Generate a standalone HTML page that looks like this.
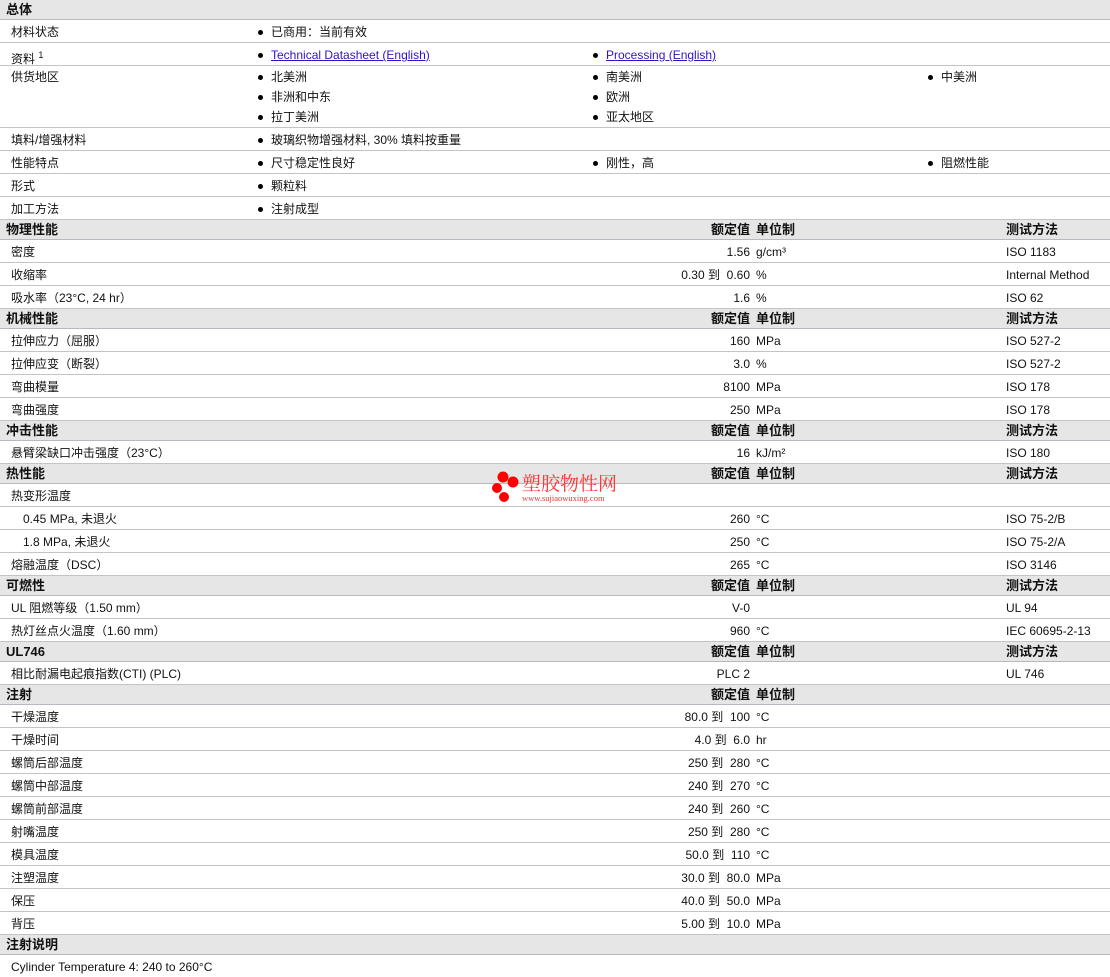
<!DOCTYPE html>
<html><head><meta charset="utf-8"><style>
*{margin:0;padding:0;box-sizing:border-box}
body{width:1110px;height:975px;background:#fff;font-family:"Liberation Sans","Noto Sans CJK SC",sans-serif;font-size:12px;color:#111;overflow:hidden;position:relative}
.r{position:relative;height:23px;border-bottom:1px solid #c4c4c8;}
.h{position:relative;height:20px;background:#e6e6e6;border-bottom:1px solid #b8b8c0;font-weight:bold;font-size:13px}
.r span,.h span{position:absolute;top:1px;line-height:22px;white-space:nowrap}
.h span{line-height:19px;top:0}
.l{left:11px}.hl{left:6px}
.v{right:360px;text-align:right}
.u{left:756px}
.m{left:1006px}
.b{padding-left:13px}
.b:before{content:"";position:absolute;left:0;top:9px;width:5px;height:5px;border-radius:50%;background:#000}
a{color:#3311cc;text-decoration:underline}
.c1{left:258px}.c2{left:593px}.c3{left:928px}
.logo{position:absolute;left:491px;top:470px}
</style></head><body>
<div class="h"><span class="hl">总体</span></div>
<div class="r"><span class="l">材料状态</span><span class="c1 b">已商用：当前有效</span></div>
<div class="r"><span class="l">资料 <sup style="font-size:9px">1</sup></span><span class="c1 b"><a>Technical Datasheet (English)</a></span><span class="c2 b"><a>Processing (English)</a></span></div>
<div class="r" style="height:62px"><span class="l" style="top:0">供货地区</span>
<span class="c1 b" style="top:0">北美洲</span><span class="c1 b" style="top:20px">非洲和中东</span><span class="c1 b" style="top:40px">拉丁美洲</span>
<span class="c2 b" style="top:0">南美洲</span><span class="c2 b" style="top:20px">欧洲</span><span class="c2 b" style="top:40px">亚太地区</span>
<span class="c3 b" style="top:0">中美洲</span></div>
<div class="r"><span class="l">填料/增强材料</span><span class="c1 b">玻璃织物增强材料, 30% 填料按重量</span></div>
<div class="r"><span class="l">性能特点</span><span class="c1 b">尺寸稳定性良好</span><span class="c2 b">刚性，高</span><span class="c3 b">阻燃性能</span></div>
<div class="r"><span class="l">形式</span><span class="c1 b">颗粒料</span></div>
<div class="r"><span class="l">加工方法</span><span class="c1 b">注射成型</span></div>

<div class="h"><span class="hl">物理性能</span><span class="v">额定值</span><span class="u">单位制</span><span class="m">测试方法</span></div>
<div class="r"><span class="l">密度</span><span class="v">1.56</span><span class="u">g/cm³</span><span class="m">ISO 1183</span></div>
<div class="r"><span class="l">收缩率</span><span class="v">0.30 到 &nbsp;0.60</span><span class="u">%</span><span class="m">Internal Method</span></div>
<div class="r"><span class="l">吸水率（23°C, 24 hr）</span><span class="v">1.6</span><span class="u">%</span><span class="m">ISO 62</span></div>

<div class="h"><span class="hl">机械性能</span><span class="v">额定值</span><span class="u">单位制</span><span class="m">测试方法</span></div>
<div class="r"><span class="l">拉伸应力（屈服）</span><span class="v">160</span><span class="u">MPa</span><span class="m">ISO 527-2</span></div>
<div class="r"><span class="l">拉伸应变（断裂）</span><span class="v">3.0</span><span class="u">%</span><span class="m">ISO 527-2</span></div>
<div class="r"><span class="l">弯曲模量</span><span class="v">8100</span><span class="u">MPa</span><span class="m">ISO 178</span></div>
<div class="r"><span class="l">弯曲强度</span><span class="v">250</span><span class="u">MPa</span><span class="m">ISO 178</span></div>

<div class="h"><span class="hl">冲击性能</span><span class="v">额定值</span><span class="u">单位制</span><span class="m">测试方法</span></div>
<div class="r"><span class="l">悬臂梁缺口冲击强度（23°C）</span><span class="v">16</span><span class="u">kJ/m²</span><span class="m">ISO 180</span></div>

<div class="h"><span class="hl">热性能</span><span class="v">额定值</span><span class="u">单位制</span><span class="m">测试方法</span></div>
<div class="r"><span class="l">热变形温度</span></div>
<div class="r"><span class="l" style="left:23px">0.45 MPa, 未退火</span><span class="v">260</span><span class="u">°C</span><span class="m">ISO 75-2/B</span></div>
<div class="r"><span class="l" style="left:23px">1.8 MPa, 未退火</span><span class="v">250</span><span class="u">°C</span><span class="m">ISO 75-2/A</span></div>
<div class="r"><span class="l">熔融温度（DSC）</span><span class="v">265</span><span class="u">°C</span><span class="m">ISO 3146</span></div>

<div class="h"><span class="hl">可燃性</span><span class="v">额定值</span><span class="u">单位制</span><span class="m">测试方法</span></div>
<div class="r"><span class="l">UL 阻燃等级（1.50 mm）</span><span class="v">V-0</span><span class="m">UL 94</span></div>
<div class="r"><span class="l">热灯丝点火温度（1.60 mm）</span><span class="v">960</span><span class="u">°C</span><span class="m">IEC 60695-2-13</span></div>

<div class="h"><span class="hl">UL746</span><span class="v">额定值</span><span class="u">单位制</span><span class="m">测试方法</span></div>
<div class="r"><span class="l">相比耐漏电起痕指数(CTI) (PLC)</span><span class="v">PLC 2</span><span class="m">UL 746</span></div>

<div class="h"><span class="hl">注射</span><span class="v">额定值</span><span class="u">单位制</span></div>
<div class="r"><span class="l">干燥温度</span><span class="v">80.0 到 &nbsp;100</span><span class="u">°C</span></div>
<div class="r"><span class="l">干燥时间</span><span class="v">4.0 到 &nbsp;6.0</span><span class="u">hr</span></div>
<div class="r"><span class="l">螺筒后部温度</span><span class="v">250 到 &nbsp;280</span><span class="u">°C</span></div>
<div class="r"><span class="l">螺筒中部温度</span><span class="v">240 到 &nbsp;270</span><span class="u">°C</span></div>
<div class="r"><span class="l">螺筒前部温度</span><span class="v">240 到 &nbsp;260</span><span class="u">°C</span></div>
<div class="r"><span class="l">射嘴温度</span><span class="v">250 到 &nbsp;280</span><span class="u">°C</span></div>
<div class="r"><span class="l">模具温度</span><span class="v">50.0 到 &nbsp;110</span><span class="u">°C</span></div>
<div class="r"><span class="l">注塑温度</span><span class="v">30.0 到 &nbsp;80.0</span><span class="u">MPa</span></div>
<div class="r"><span class="l">保压</span><span class="v">40.0 到 &nbsp;50.0</span><span class="u">MPa</span></div>
<div class="r"><span class="l">背压</span><span class="v">5.00 到 &nbsp;10.0</span><span class="u">MPa</span></div>

<div class="h"><span class="hl">注射说明</span></div>
<div style="position:relative;height:20px"><span style="position:absolute;left:11px;top:2px;line-height:20px">Cylinder Temperature 4: 240 to 260°C</span></div>

<div class="logo">
<svg width="32" height="32" style="position:absolute;left:0;top:0"><circle cx="12" cy="7" r="5.5" fill="#f00"/><circle cx="22" cy="12" r="5.5" fill="#f00"/><circle cx="6" cy="18" r="5" fill="#f00"/><circle cx="13" cy="27" r="5" fill="#f00"/></svg>
<div style="position:absolute;left:31px;top:3px;color:#f33;font-size:19px;line-height:20px;white-space:nowrap;font-family:'Noto Serif CJK SC',serif">塑胶物性网</div>
<div style="position:absolute;left:31px;top:23px;color:#e33;font-size:8.5px;white-space:nowrap;font-family:'Liberation Serif',serif">www.sujiaowuxing.com</div>
</div>
</body></html>
